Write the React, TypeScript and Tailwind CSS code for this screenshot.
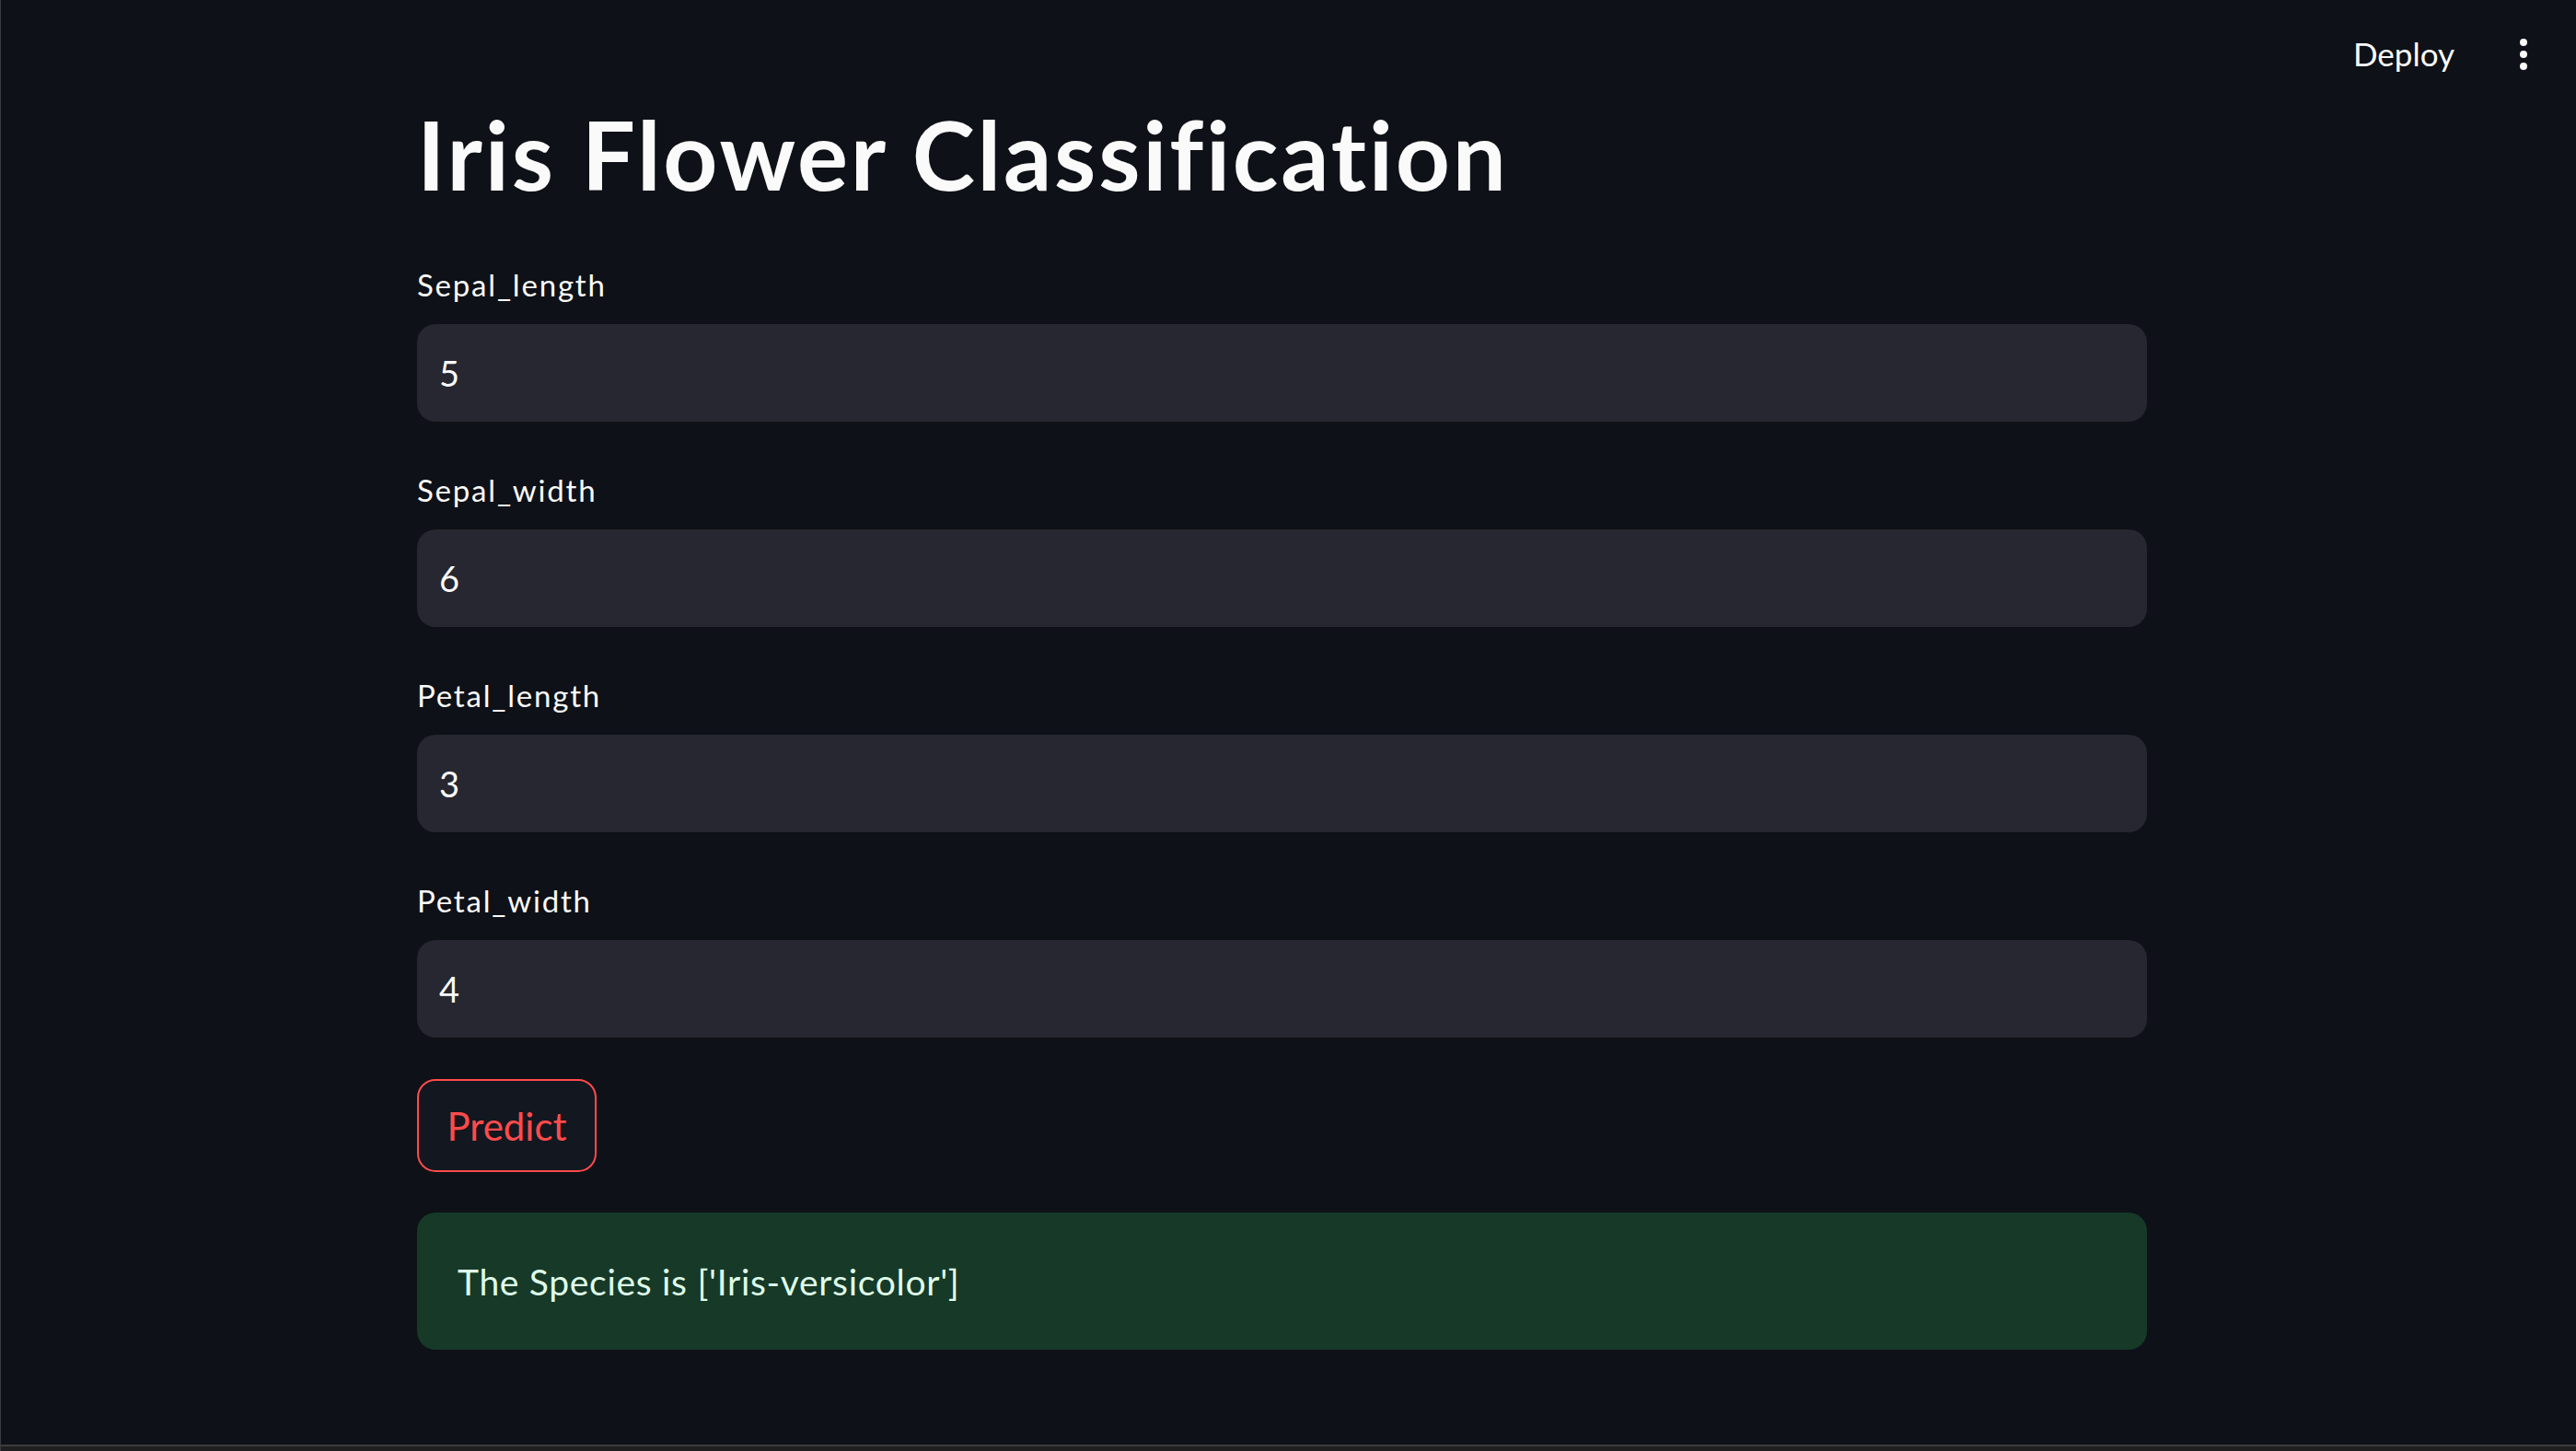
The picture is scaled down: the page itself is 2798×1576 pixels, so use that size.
import React from "react";

const fields = [
  { label: "Sepal_length", value: "5" },
  { label: "Sepal_width", value: "6" },
  { label: "Petal_length", value: "3" },
  { label: "Petal_width", value: "4" },
];

function MoreIcon() {
  return (
    <svg width="8" height="34" viewBox="0 0 8 34" fill="#fafafa">
      <circle cx="4" cy="4" r="4" />
      <circle cx="4" cy="17" r="4" />
      <circle cx="4" cy="30" r="4" />
    </svg>
  );
}

export default function App() {
  return (
    <div
      className="relative flex h-[1576px] w-full flex-col border-l border-[#3a3b40] bg-[#0e1117] text-[#fafafa]"
      style={{ fontFamily: "Lato, 'Noto Sans', sans-serif" }}
    >
      {/* header */}
      <header className="absolute right-0 top-0 flex items-center gap-[71px] pr-[53px] pt-[39px]">
        <button className="text-[35px] leading-[42px] text-[#fafafa] -mt-[2px]">Deploy</button>
        <MoreIcon />
      </header>

      <main className="flex flex-1 flex-col pl-[452px] pt-[105px]">
        <div className="flex w-[1879px] flex-col">
          <h1 className="text-[103px] font-bold leading-[124px] tracking-[2.8px]">
            Iris Flower Classification
          </h1>

          <div className="mt-[60px] flex flex-col gap-[54px]">
            {fields.map((f) => (
              <div key={f.label} className="flex flex-col gap-[23px]">
                <label className="text-[33px] leading-[40px] tracking-[1.8px]">{f.label}</label>
                <div className="flex h-[106px] items-center rounded-[20px] bg-[#262730] px-[24px]">
                  <span className="text-[38px] leading-[46px]">{f.value}</span>
                </div>
              </div>
            ))}
          </div>

          <button className="mt-[45px] flex h-[101px] w-[195px] items-center justify-center rounded-[20px] border-2 border-[#ff4b4b] bg-[#131720] text-[42px] leading-[50px] text-[#ff4b4b]">
            Predict
          </button>

          <div className="mt-[44px] flex h-[149px] items-center rounded-[20px] bg-[#173928] px-[44px]">
            <p className="text-[39px] leading-[48px] tracking-[0.7px] text-[#dffde9]">
              The Species is ['Iris-versicolor']
            </p>
          </div>
        </div>
      </main>

      <div className="h-[2px] w-full bg-[#3c3c3c]" />
      <div className="h-[5px] w-full bg-[#1f1f1f]" />
    </div>
  );
}
